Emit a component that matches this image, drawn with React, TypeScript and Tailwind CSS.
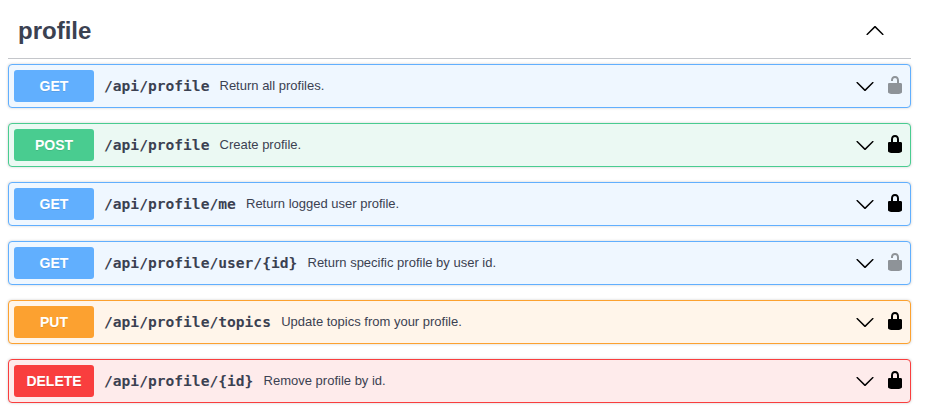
const rows = [
  { m: 'GET', p: '/api/profile', pw: 'w-[105.5px]', d: 'Return all profiles.', locked: false },
  { m: 'POST', p: '/api/profile', pw: 'w-[105.5px]', d: 'Create profile.', locked: true },
  { m: 'GET', p: '/api/profile/me', pw: 'w-[132px]', d: 'Return logged user profile.', locked: true },
  { m: 'GET', p: '/api/profile/user/{id}', pw: 'w-[193.5px]', d: 'Return specific profile by user id.', locked: false },
  { m: 'PUT', p: '/api/profile/topics', pw: 'w-[167.2px]', d: 'Update topics from your profile.', locked: true },
  { m: 'DELETE', p: '/api/profile/{id}', pw: 'w-[149.6px]', d: 'Remove profile by id.', locked: true },
];

const box: Record<string, string> = {
  GET: 'border-[#61affe] bg-[#eff7ff]',
  POST: 'border-[#49cc90] bg-[#ebf9f3]',
  PUT: 'border-[#fca130] bg-[#fff5ea]',
  DELETE: 'border-[#f93e3e] bg-[#feebeb]',
};
const badge: Record<string, string> = {
  GET: 'bg-[#61affe]',
  POST: 'bg-[#49cc90]',
  PUT: 'bg-[#fca130]',
  DELETE: 'bg-[#f93e3e]',
};

function Chevron({ up = false }: { up?: boolean }) {
  return (
    <svg className={up ? 'h-5 w-5 rotate-180' : 'h-5 w-5'} viewBox="0 0 20 20">
      <path d="M17.418 6.109c.272-.268.709-.268.979 0s.271.701 0 .969l-7.908 7.83c-.27.268-.707.268-.979 0l-7.908-7.83c-.27-.268-.27-.701 0-.969.271-.268.709-.268.979 0L10 13.25l7.418-7.141z" />
    </svg>
  );
}

function Lock({ locked }: { locked: boolean }) {
  return (
    <svg className={locked ? 'mb-[2px] h-5 w-5' : 'mb-[2px] h-5 w-5 opacity-40'} viewBox="0 0 20 20">
      {locked ? (
        <path d="M15.8 8H14V5.6C14 2.703 12.665 1 10 1 7.334 1 6 2.703 6 5.6V8H4c-.553 0-1 .646-1 1.199V17c0 .549.428 1.139.951 1.307l1.197.387C5.672 18.861 6.55 19 7.1 19h5.8c.549 0 1.428-.139 1.951-.307l1.196-.387c.524-.167.953-.757.953-1.306V9.199C17 8.646 16.352 8 15.8 8zM12 8H8V5.199C8 3.754 8.797 3 10 3c1.203 0 2 .754 2 2.199V8z" />
      ) : (
        <path d="M15.8 8H14V5.6C14 2.703 12.665 1 10 1 7.334 1 6 2.703 6 5.6V6h2v-.801C8 3.754 8.797 3 10 3c1.203 0 2 .754 2 2.199V8H4c-.553 0-1 .646-1 1.199V17c0 .549.428 1.139.951 1.307l1.197.387C5.672 18.861 6.55 19 7.1 19h5.8c.549 0 1.428-.139 1.951-.307l1.196-.387c.524-.167.953-.757.953-1.306V9.199C17 8.646 16.352 8 15.8 8z" />
      )}
    </svg>
  );
}

export default function App() {
  return (
    <div className="h-[410px] overflow-hidden bg-white pl-2 font-['Liberation_Sans',Arial,sans-serif] text-[#3b4151]">
      <header className="flex h-[59px] w-[903px] items-center border-b border-[#3b4151]/30 pt-[3px] pr-[26px] pl-[10px]">
        <h3 className="flex-1 text-2xl leading-7 font-bold">profile</h3>
        <Chevron up />
      </header>
      <main className="mt-[5px] flex w-[903px] flex-col gap-[15px]">
        {rows.map((r) => (
          <section key={r.m + r.p} className={`flex h-11 items-center rounded border px-[5px] shadow-[0_0_3px_rgba(0,0,0,0.19)] ${box[r.m]}`}>
            <span className={`flex h-8 w-20 items-center justify-center rounded-[3px] text-sm font-bold text-white [text-shadow:0_1px_0_rgba(0,0,0,0.1)] ${badge[r.m]}`}>{r.m}</span>
            <code className={`ml-[10px] font-['DejaVu_Sans_Mono',monospace] text-[14.6px] font-bold whitespace-nowrap ${r.pw}`}>{r.p}</code>
            <span className="ml-[10px] text-[13px] whitespace-nowrap">{r.d}</span>
            <span className="mr-[10px] ml-auto flex"><Chevron /></span>
            <Lock locked={r.locked} />
          </section>
        ))}
      </main>
    </div>
  );
}
